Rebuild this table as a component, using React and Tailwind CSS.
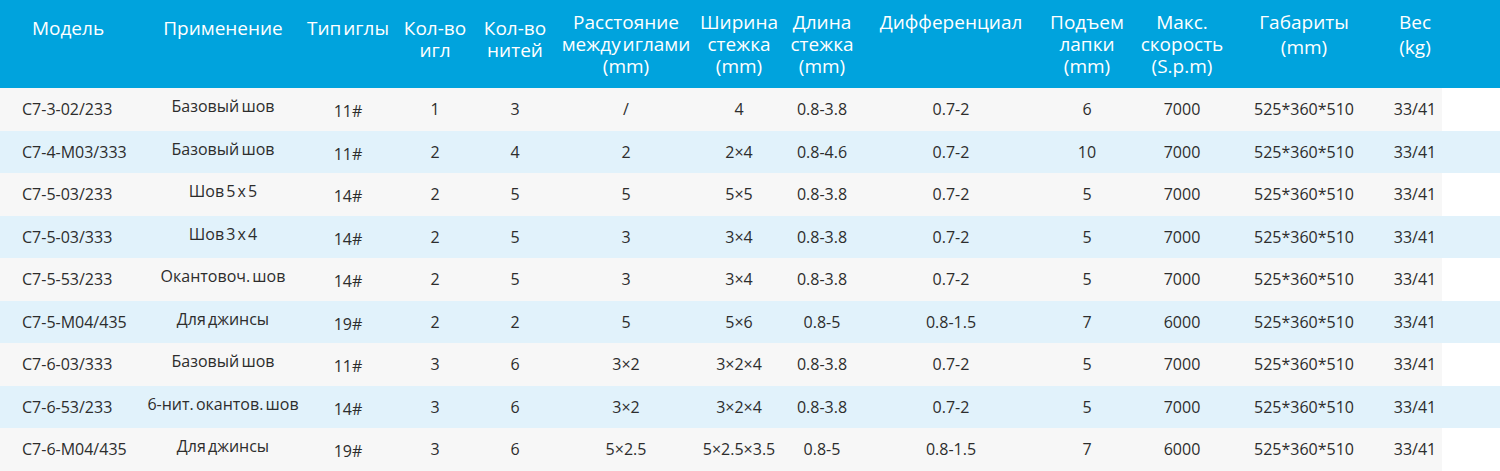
import React from "react";

const cols = "grid-cols-[136px_174px_76px_98px_62px_160px_66px_100px_158px_114px_76px_168px_54px]";

const headers = [
  { lines: ["Модель"], low: true },
  { lines: ["Применение"], low: true },
  { lines: ["Тип иглы"], low: true },
  { lines: ["Кол-во", "игл"], low: true },
  { lines: ["Кол-во", "нитей"], low: true },
  { lines: ["Расстояние", "между иглами", "(mm)"] },
  { lines: ["Ширина", "стежка", "(mm)"] },
  { lines: ["Длина", "стежка", "(mm)"] },
  { lines: ["Дифференциал"] },
  { lines: ["Подъем", "лапки", "(mm)"] },
  { lines: ["Макс.", "скорость", "(S.p.m)"] },
  { lines: ["Габариты", "(mm)"], wide: true },
  { lines: ["Вес", "(kg)"], wide: true },
];

const rows = [
  ["C7-3-02/233", "Базовый шов", "11#", "1", "3", "/", "4", "0.8-3.8", "0.7-2", "6", "7000", "525*360*510", "33/41"],
  ["C7-4-M03/333", "Базовый шов", "11#", "2", "4", "2", "2×4", "0.8-4.6", "0.7-2", "10", "7000", "525*360*510", "33/41"],
  ["C7-5-03/233", "Шов 5 x 5", "14#", "2", "5", "5", "5×5", "0.8-3.8", "0.7-2", "5", "7000", "525*360*510", "33/41"],
  ["C7-5-03/333", "Шов 3 x 4", "14#", "2", "5", "3", "3×4", "0.8-3.8", "0.7-2", "5", "7000", "525*360*510", "33/41"],
  ["C7-5-53/233", "Окантовоч. шов", "14#", "2", "5", "3", "3×4", "0.8-3.8", "0.7-2", "5", "7000", "525*360*510", "33/41"],
  ["C7-5-M04/435", "Для джинсы", "19#", "2", "2", "5", "5×6", "0.8-5", "0.8-1.5", "7", "6000", "525*360*510", "33/41"],
  ["C7-6-03/333", "Базовый шов", "11#", "3", "6", "3×2", "3×2×4", "0.8-3.8", "0.7-2", "5", "7000", "525*360*510", "33/41"],
  ["C7-6-53/233", "6-нит. окантов. шов", "14#", "3", "6", "3×2", "3×2×4", "0.8-3.8", "0.7-2", "5", "7000", "525*360*510", "33/41"],
  ["C7-6-M04/435", "Для джинсы", "19#", "3", "6", "5×2.5", "5×2.5×3.5", "0.8-5", "0.8-1.5", "7", "6000", "525*360*510", "33/41"],
];

function Cell({ value, index }) {
  if (index === 0) {
    return <div className="flex items-center pl-[22px] whitespace-nowrap">{value}</div>;
  }
  let shift = "";
  if (index === 1) shift = "pb-[6px] [word-spacing:-2px]";
  if (index === 2) shift = "pt-[4px]";
  return (
    <div className={`flex items-center justify-center whitespace-nowrap ${shift}`}>
      {value}
    </div>
  );
}

export default function App() {
  return (
    <div className="w-[1500px] h-[471px] bg-white overflow-hidden font-['Open_Sans',sans-serif]">
      {/* header */}
      <div className="h-[88px] bg-[#00a3dd] text-white">
        <div className={`grid ${cols} w-[1442px] h-full`}>
          {headers.map((h, i) => (
            <div
              key={i}
              className={`flex flex-col items-center text-[19px] leading-[22px] whitespace-nowrap [word-spacing:-3px] ${
                h.low ? "pt-[17px]" : "pt-[11px] gap-0"
              } ${h.wide ? "gap-[3px]" : ""}`}
            >
              {h.lines.map((l) => (
                <span key={l}>{l}</span>
              ))}
            </div>
          ))}
        </div>
      </div>

      {/* rows */}
      {rows.map((r, ri) => {
        const blue = ri % 2 === 1;
        return (
          <div key={ri} className={blue ? "bg-[#e1f2fb]" : "bg-white"}>
            <div
              className={`grid ${cols} w-[1442px] h-[42.5px] text-[16px] text-[#2d2d2d] ${
                blue ? "" : "bg-[#f7f7f7]"
              }`}
            >
              {r.map((v, ci) => (
                <Cell key={ci} value={v} index={ci} />
              ))}
            </div>
          </div>
        );
      })}
    </div>
  );
}
